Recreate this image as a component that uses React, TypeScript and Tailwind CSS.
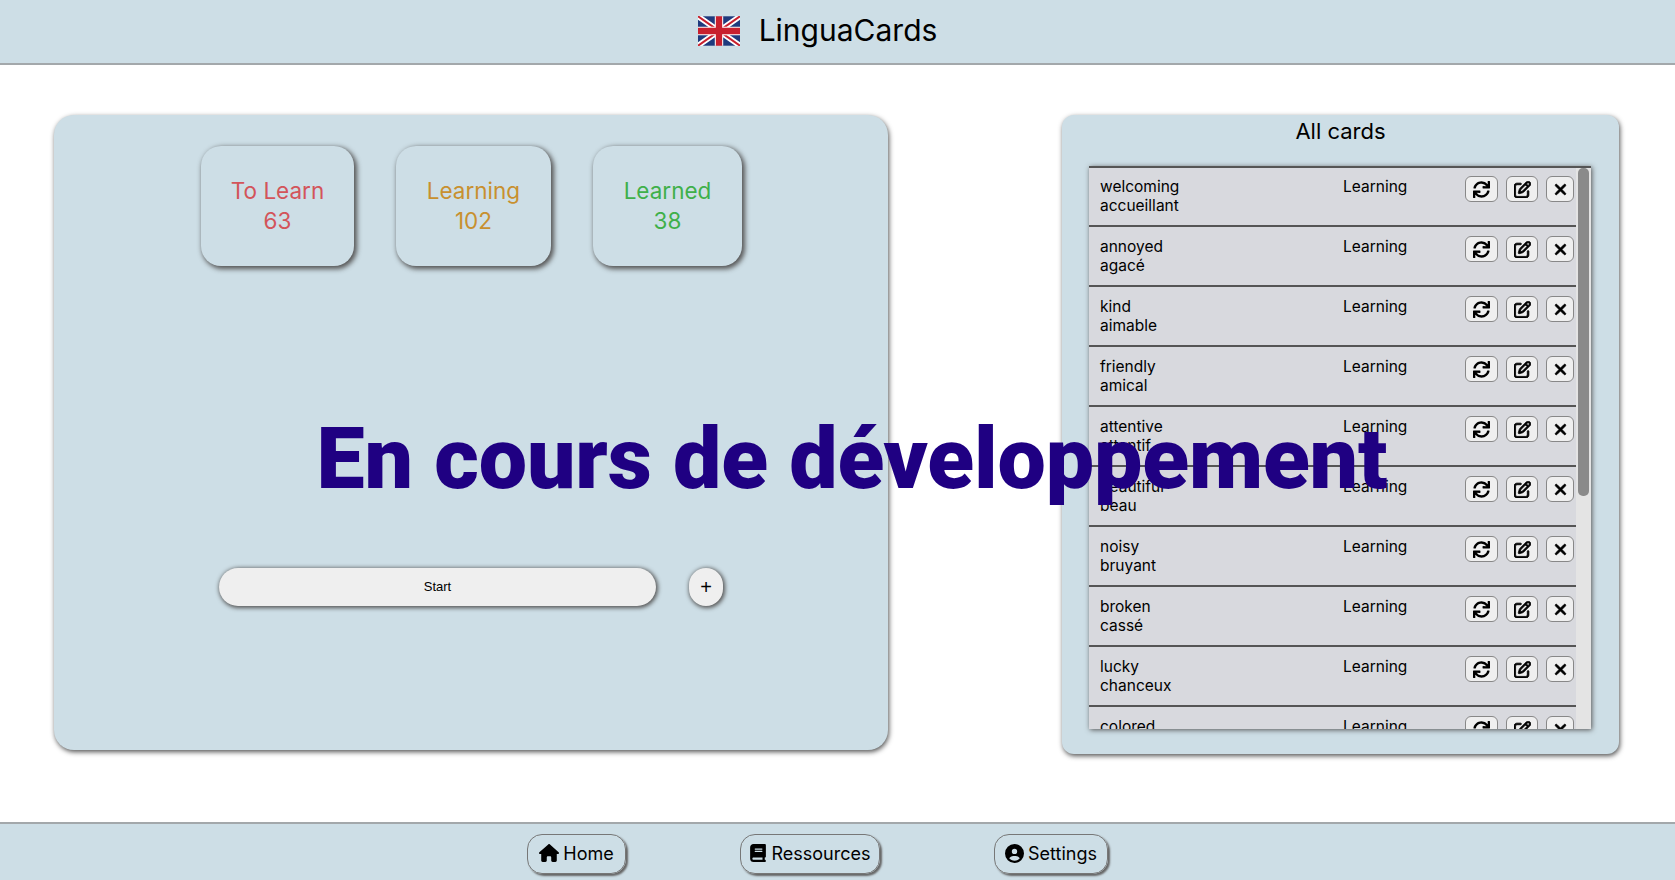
import React from 'react';
import { FaHouse, FaBook, FaCircleUser, FaRegPenToSquare, FaXmark } from 'react-icons/fa6';
import { FaSync } from 'react-icons/fa';

const cards = [
  ['welcoming', 'accueillant'],
  ['annoyed', 'agacé'],
  ['kind', 'aimable'],
  ['friendly', 'amical'],
  ['attentive', 'attentif'],
  ['beautiful', 'beau'],
  ['noisy', 'bruyant'],
  ['broken', 'cassé'],
  ['lucky', 'chanceux'],
  ['colored', 'coloré'],
];

const Flag = () => (
  <svg viewBox="0 0 60 42" className="w-[42px] h-[30px]">
    <rect width="60" height="42" fill="#1f3a7d" />
    <path d="M0 0L60 42M60 0L0 42" stroke="#fff" strokeWidth="8" />
    <path d="M0 0L60 42M60 0L0 42" stroke="#c8202e" strokeWidth="3" />
    <path d="M30 0V42M0 21H60" stroke="#fff" strokeWidth="12" />
    <path d="M30 0V42M0 21H60" stroke="#c8202e" strokeWidth="9" />
  </svg>
);

const Stat = ({ label, value, color, width }: { label: string; value: number; color: string; width: string }) => (
  <div className={`${width} ${color} h-[120px] rounded-[20px] flex flex-col items-center justify-center text-[22.5px] leading-[30px] shadow-[2px_2px_5px_1px_#555]`}>
    <span>{label}</span>
    <span>{value}</span>
  </div>
);

const IconBtn = ({ width, children }: { width: string; children: React.ReactNode }) => (
  <button className={`${width} h-[26px] flex items-center justify-center rounded-[6px] border border-[#888] bg-[#efefef] text-black text-[17px]`}>
    {children}
  </button>
);

const NavBtn = ({ icon, label, width }: { icon: React.ReactNode; label: string; width: string }) => (
  <button className={`${width} h-[40px] flex items-center justify-center gap-[4px] pb-[2px] rounded-[15px] border border-[#777] text-[18px] text-black shadow-[2px_2px_2px_#666]`}>
    {icon}
    {label}
  </button>
);

export default function App() {
  return (
    <div className="relative h-[880px] overflow-hidden bg-white flex flex-col font-['Inter',sans-serif] text-black">
      <header className="h-[65px] bg-[#cddee6] border-b-2 border-[#a3a8ab] flex items-center justify-center gap-[19px] pr-[40px] pb-[2px]">
        <Flag />
        <h1 className="text-[30px]">LinguaCards</h1>
      </header>

      <main className="flex-1 flex justify-between pl-[54px] pr-[56px] pt-[50px] items-start">
        <section className="w-[834px] h-[635px] bg-[#cddee6] rounded-[20px] shadow-[1px_2px_5px_#555] flex flex-col items-center">
          <div className="flex gap-[42px] mt-[31px] ml-[1px]">
            <Stat label="To Learn" value={63} color="text-[#d3545a]" width="w-[153px]" />
            <Stat label="Learning" value={102} color="text-[#c8902f]" width="w-[155px]" />
            <Stat label="Learned" value={38} color="text-[#3fb04a]" width="w-[149px]" />
          </div>
          <div className="flex items-center gap-[33px] mt-[302px]">
            <button className="w-[437px] h-[38px] rounded-[20px] bg-[#efefef] text-[13px] font-['Liberation_Sans',sans-serif] shadow-[1px_1px_4px_1px_#555]">
              Start
            </button>
            <button className="w-[34px] h-[38px] rounded-[17px] bg-[#efefef] text-[20px] font-['Liberation_Sans',sans-serif] shadow-[1px_1px_4px_1px_#555]">
              +
            </button>
          </div>
        </section>

        <section className="w-[557px] h-[639px] bg-[#cddee6] rounded-[12px] shadow-[1px_2px_5px_#555] flex flex-col items-center">
          <h2 className="text-[22px] leading-[30px] mt-[1px]">All cards</h2>
          <div className="relative w-[502px] h-[563px] mt-[20px] mr-[1px] border-t-2 border-[#555] shadow-[1px_1px_5px_#555] overflow-hidden bg-[#e4e4e4]">
            <div className="-mt-[1px] mr-[15px]">
              {cards.map(([en, fr]) => (
                <div key={en} className="h-[60px] bg-[#d8d9de] border-b-2 border-[#555] flex items-start pt-[10px] pl-[11px] text-[15.5px] leading-[19px]">
                  <div className="w-[243px]">
                    <div>{en}</div>
                    <div>{fr}</div>
                  </div>
                  <div className="w-[122px]">Learning</div>
                  <div className="flex gap-[8px] -mt-[1px]">
                    <IconBtn width="w-[33px]"><FaSync /></IconBtn>
                    <IconBtn width="w-[32px]"><FaRegPenToSquare stroke="currentColor" strokeWidth={24} /></IconBtn>
                    <IconBtn width="w-[28px]"><FaXmark stroke="currentColor" strokeWidth={20} /></IconBtn>
                  </div>
                </div>
              ))}
            </div>
            <div className="absolute top-0 right-[2px] w-[11px] h-[328px] rounded-[5px] bg-[#8a8a8a]" />
          </div>
        </section>
      </main>

      <footer className="h-[58px] bg-[#cddee6] border-t-2 border-[#a3a8ab] flex items-start pt-[10px] pl-[527px]">
        <NavBtn icon={<FaHouse size={20} />} label="Home" width="w-[99px]" />
        <NavBtn icon={<FaBook size={18} />} label="Ressources" width="w-[140px] ml-[114px]" />
        <NavBtn icon={<FaCircleUser size={19} />} label="Settings" width="w-[114px] ml-[114px]" />
      </footer>

      <div className="absolute left-0 right-0 top-[404px] text-center pl-[29px] text-[86px] leading-[110px] font-black tracking-[-0.15px] text-[#1f0082] font-['Roboto',sans-serif] pointer-events-none">
        En cours de développement
      </div>
    </div>
  );
}
